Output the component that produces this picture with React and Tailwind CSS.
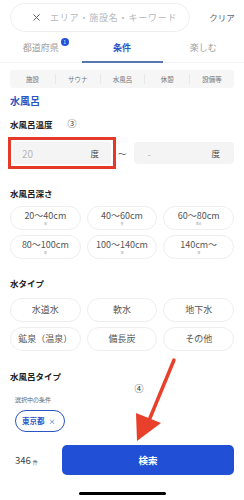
import { X } from 'lucide-react'

const depths = [
  { label: '20〜40cm', sub: '浅' },
  { label: '40〜60cm', sub: '普' },
  { label: '60〜80cm', sub: '深め' },
  { label: '80〜100cm', sub: '深' },
  { label: '100〜140cm', sub: '深' },
  { label: '140cm〜', sub: '深' },
]

const waters = ['水道水', '軟水', '地下水', '鉱泉（温泉）', '備長炭', 'その他']

const subTabs = ['施設', 'サウナ', '水風呂', '休憩', '設備等']

export default function App() {
  return (
    <div
      className="relative w-[244px] h-[500px] overflow-hidden bg-white text-[#333]"
      style={{ fontFamily: '"Noto Sans CJK JP", "Noto Sans", sans-serif' }}
    >
      {/* Search */}
      <div className="flex items-center pl-[10px] pt-[3px]">
        <div className="flex items-center h-[29px] w-[180px] rounded-full border border-[#efefef] pl-[20px] gap-[8px]">
          <X size={11} strokeWidth={2} className="text-[#555] shrink-0" />
          <span className="text-[9px] leading-[12px] text-[#b8b8b8] tracking-[0.8px] whitespace-nowrap">
            エリア・施設名・キーワード
          </span>
        </div>
        <span className="flex-1 text-center text-[8.5px] text-[#666] pl-[10px]">クリア</span>
      </div>

      {/* Tabs */}
      <div className="grid grid-cols-3 mt-[3px] h-[28px] border-b border-[#f3f3f3]">
        <div className="flex justify-center pt-[7px]">
          <span className="relative text-[9px] leading-[12px] text-[#a0a0a0]">
            都道府県
            <span className="absolute -top-[4px] -right-[10px] w-[8px] h-[8px] rounded-full bg-[#2451d6] text-white text-[5px] leading-[8px] text-center">
              1
            </span>
          </span>
        </div>
        <div className="flex justify-center pt-[7px] relative">
          <span className="text-[9px] leading-[12px] text-[#2b56c8] font-bold">条件</span>
          <div className="absolute bottom-[-1px] left-[1px] right-0 h-[2px] bg-[#5876b4]" />
        </div>
        <div className="flex justify-center pt-[7px]">
          <span className="text-[9px] leading-[12px] text-[#a0a0a0]">楽しむ</span>
        </div>
      </div>

      {/* Sub tabs */}
      <div className="mx-[10px] mt-[7px] h-[18px] bg-[#f6f6f6] rounded-[3px] grid grid-cols-5 items-center">
        {subTabs.map((t, i) => (
          <div
            key={t}
            className={`text-center text-[6.5px] leading-[10px] text-[#777] ${i > 0 ? 'border-l border-[#e8e8e8]' : ''}`}
          >
            {t}
          </div>
        ))}
      </div>

      <div className="px-[10px]">
        <div className="mt-[6px] text-[10px] font-bold text-[#2a55c4] leading-[14px]">水風呂</div>

        {/* Temperature */}
        <div className="mt-[10px] flex items-center h-[12px]">
          <span className="text-[8.5px] leading-[12px] font-bold text-[#222]">水風呂温度</span>
          <span className="ml-[15px] text-[9px] leading-[12px] text-[#333]">③</span>
        </div>
        <div className="mt-[7px] flex items-center">
          <div className="border-[3px] border-[#e53a2a] -ml-[2px] p-[2px] w-[108px]">
            <div className="h-[22px] bg-[#f4f4f4] rounded-[3px] flex items-center justify-between pl-[9px] pr-[12px]">
              <span className="text-[10px] text-[#b8b8b8]">20</span>
              <span className="text-[8.5px] text-[#444]">度</span>
            </div>
          </div>
          <span className="text-[8.5px] text-[#555] ml-[2px] mr-[7px]">〜</span>
          <div className="flex-1 h-[22px] bg-[#f4f4f4] rounded-[4px] flex items-center justify-between pl-[14px] pr-[14px]">
            <span className="text-[10px] text-[#b8b8b8]">-</span>
            <span className="text-[8.5px] text-[#444]">度</span>
          </div>
        </div>

        {/* Depth */}
        <div className="mt-[18px] text-[8.5px] leading-[12px] font-bold text-[#222]">水風呂深さ</div>
        <div className="mt-[7px] grid grid-cols-3 gap-x-[6px] gap-y-[5px]">
          {depths.map((d) => (
            <div
              key={d.label}
              className="h-[24px] rounded-full border border-[#eeeeee] flex flex-col items-center justify-center"
            >
              <span className="text-[9px] text-[#555] leading-[11px]">{d.label}</span>
              <span className="text-[3px] text-[#aaa] leading-[4px] mt-[1px]">{d.sub}</span>
            </div>
          ))}
        </div>

        {/* Water type */}
        <div className="mt-[18px] text-[8.5px] leading-[12px] font-bold text-[#222]">水タイプ</div>
        <div className="mt-[9px] grid grid-cols-3 gap-x-[6px] gap-y-[5px]">
          {waters.map((w) => (
            <div
              key={w}
              className="h-[24px] rounded-full border border-[#eeeeee] flex items-center justify-center"
            >
              <span className="text-[9px] leading-[12px] text-[#555]">{w}</span>
            </div>
          ))}
        </div>

        <div className="mt-[19px] text-[8.5px] leading-[12px] font-bold text-[#222]">水風呂タイプ</div>
      </div>

      {/* Selected */}
      <div className="px-[15px]">
        <div className="mt-[1px] text-center text-[9px] leading-[12px] text-[#333] ml-[118px] w-[12px]">④</div>
        <div className="mt-[1px] text-[6px] leading-[8px] text-[#666]">選択中の条件</div>
        <div className="mt-[6px] flex w-fit items-center gap-[4px] h-[22px] pl-[6px] pr-[8px] rounded-full border border-[#2a55c4]">
          <span className="text-[7.5px] font-bold text-[#2a55c4]">東京都</span>
          <span className="text-[7px] text-[#2a55c4]">×</span>
        </div>
      </div>

      {/* Bottom bar */}
      <div className="flex items-center mt-[13px] pl-[15px] pr-[10px]">
        <span className="w-[47px] text-[9.5px] text-[#444]">
          346<span className="text-[5px] ml-[2px]">件</span>
        </span>
        <button className="flex-1 h-[30px] rounded-[5px] bg-[#2150d6] text-white text-[9.5px] font-bold">
          検索
        </button>
      </div>

      <div className="mx-auto mt-[17px] w-[87px] h-[3px] rounded-full bg-black" />

      {/* Annotation arrow */}
      <svg className="absolute left-0 top-0 pointer-events-none" width="244" height="500">
        <line x1="174" y1="360" x2="150" y2="418" stroke="#e8402a" strokeWidth="3.5" strokeLinecap="round" />
        <polygon points="137,441 136,413 161,423" fill="#e8402a" />
      </svg>
    </div>
  )
}
